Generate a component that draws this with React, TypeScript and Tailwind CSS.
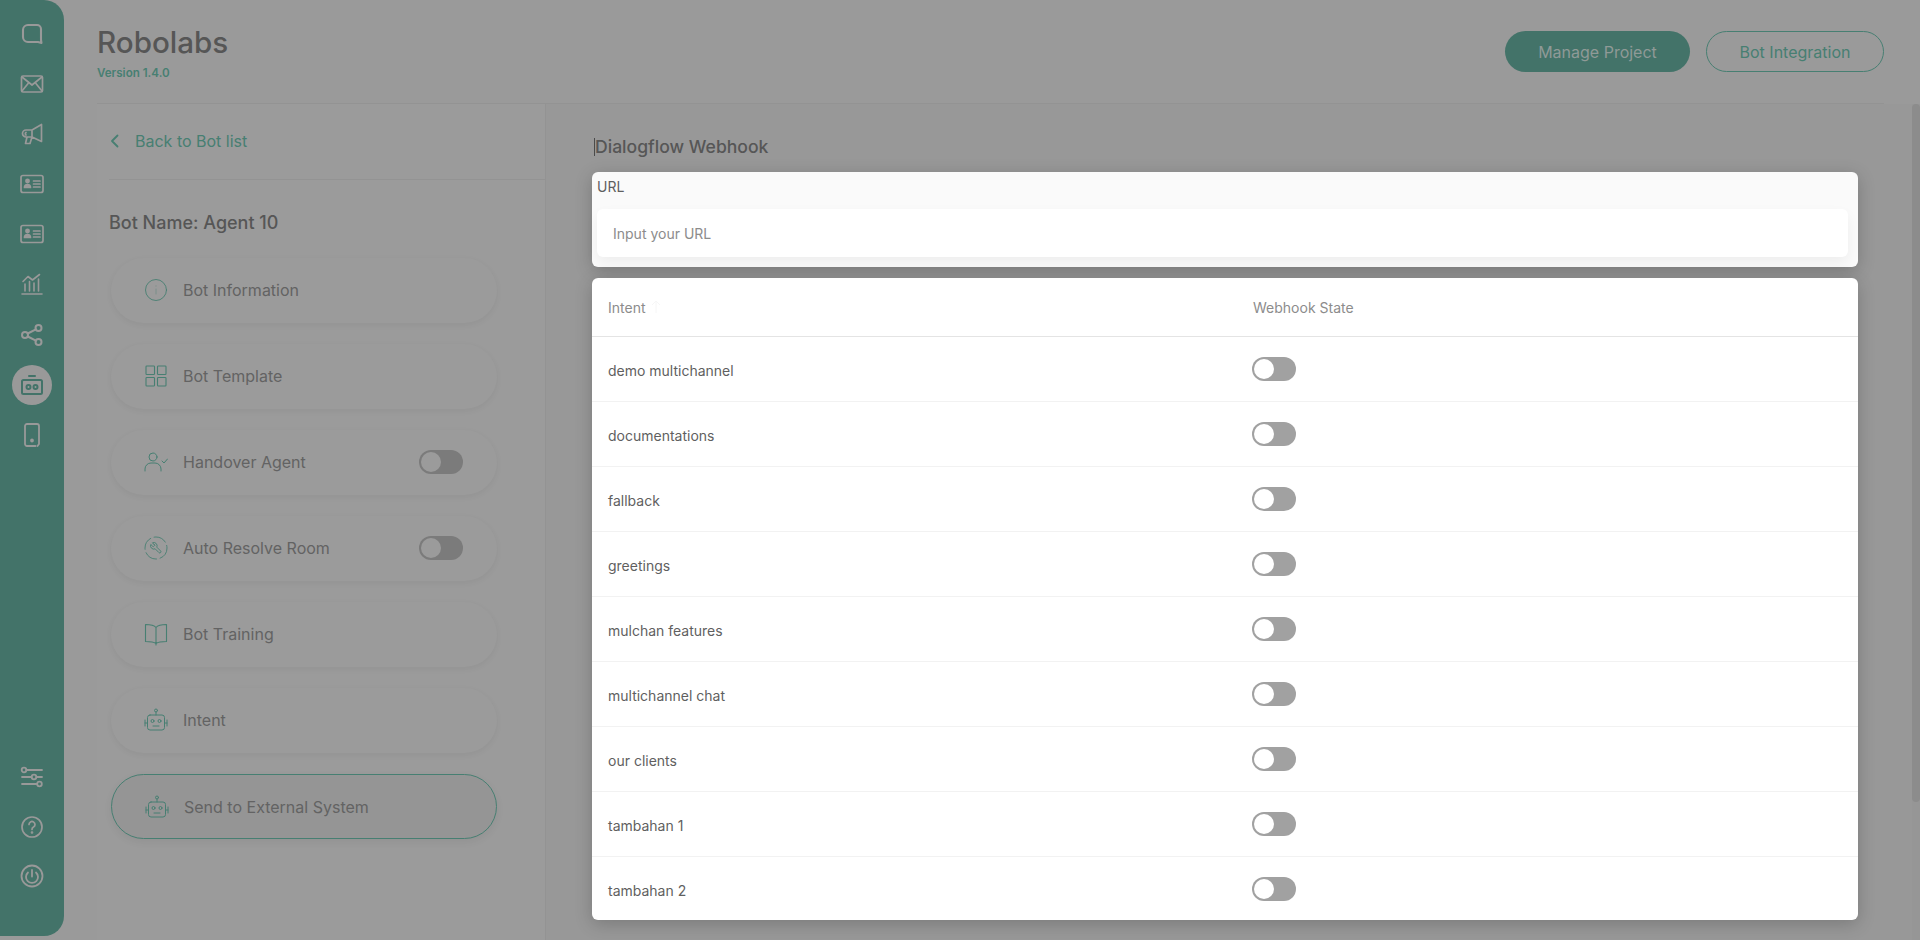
import React from "react";

const T = "#477f72";

function Svg({ size = 24, color, sw = 1.5, children }: { size?: number; color: string; sw?: number; children: React.ReactNode }) {
  return (
    <svg width={size} height={size} viewBox="0 0 24 24" fill="none" stroke={color} strokeWidth={sw} strokeLinecap="round" strokeLinejoin="round">
      {children}
    </svg>
  );
}

const IC = "#999999";
const SB = "#437369";
const navIcons: React.ReactNode[] = [
  <Svg color={IC} sw={2.1}><path d="M8 3h9a4 4 0 0 1 4 4v11l.5 3-3.500-1H8a5 5 0 0 1-5-5V8a5 5 0 0 1 5-5z" /></Svg>,
  <Svg color={IC} sw={1.7}><rect x="1.500" y="4" width="21" height="16" rx="1.500" /><path d="M2 5l10 8 10-8M2 19l6.500-8M22 19l-6.500-8" /></Svg>,
  <Svg color={IC} sw={1.7}><path d="M21.500 2.500v17L12 15H6a3.500 3.500 0 0 1 0-7h6l9.500-5.500zM12 8v7M7 15l-1.500 6.500H10l2-6.500" /><path d="M6 10.500a1.500 1.500 0 0 0 0 2.500" /></Svg>,
  <Svg color={IC} sw={1.7}><rect x="1" y="3.500" width="22" height="17" rx="2" /><circle cx="7.500" cy="9" r="1.600" fill={IC} /><path d="M4.500 15.500c0-4 6-4 6 0z" fill={IC} /><path d="M13.500 9h6.500M13.500 12h6.500M13.500 15h6.500" /></Svg>,
  <Svg color={IC} sw={1.7}><rect x="1" y="3.500" width="22" height="17" rx="2" /><circle cx="7.500" cy="9" r="1.600" fill={IC} /><path d="M4.500 15.500c0-4 6-4 6 0z" fill={IC} /><path d="M13.500 9h6.500M13.500 12h6.500M13.500 15h6.500" /></Svg>,
  <Svg color={IC} sw={1.600}><path d="M2 22h20M5 19v-7M9.500 19V9.500M14 19v-8M18.500 19V7M3 9.500l5-5 4.500 3.500 7-5.500" /></Svg>,
  <Svg color={IC} sw={2}><circle cx="5" cy="12" r="3" /><circle cx="18.500" cy="5" r="3" /><circle cx="18.500" cy="19" r="3" /><path d="M7.700 10.500l8.200-4.200M7.700 13.500l8.200 4.200" /></Svg>,
  <Svg color={SB} sw={2}><path d="M9 3h6" /><rect x="2" y="7" width="20" height="14" rx="1.500" /><circle cx="8.500" cy="14" r="2" /><circle cx="15.500" cy="14" r="2" /></Svg>,
  <Svg color={IC} sw={1.800}><path d="M15.500 23H7a2 2 0 0 1-2-2V3a2 2 0 0 1 2-2h10a2 2 0 0 1 2 2v18l-1.500 2" /><circle cx="12" cy="17.500" r="1" fill={IC} /></Svg>,
];
const bottomIcons: React.ReactNode[] = [
  <Svg color={IC} sw={1.800}><path d="M6.500 5H22M2 12h9.500M16.500 12H22M2 19h15" /><circle cx="4" cy="5" r="2.300" /><circle cx="14" cy="12" r="2.300" /><circle cx="19.500" cy="19" r="2.300" /></Svg>,
  <Svg color={IC} sw={1.700}><circle cx="12" cy="12" r="10" /><path d="M9 9.500a3 3 0 1 1 4.500 2.600c-1 .6-1.500 1.200-1.500 2.400" /><circle cx="12" cy="17.500" r=".5" fill={IC} /></Svg>,
  <Svg color={IC} sw={1.800}><circle cx="12" cy="12" r="10.500" /><path d="M12 6v6.500" /><path d="M8 8.500a6 6 0 1 0 8 0" /></Svg>,
];

const pillIcons: Record<string, React.ReactNode> = {
  info: <Svg color={T} sw={0.9}><circle cx="12" cy="12" r="10.500" /><path d="M12 11v5M12 7.800v.4" stroke="#7b8f8a" strokeWidth={1} /></Svg>,
  grid: <Svg color={T} sw={1.100}><rect x="2" y="2" width="8.500" height="8.500" rx=".8" /><rect x="13.500" y="2" width="8.500" height="8.500" rx=".8" /><rect x="2" y="13.500" width="8.500" height="8.500" rx=".8" /><rect x="13.500" y="13.500" width="8.500" height="8.500" rx=".8" /></Svg>,
  hand: <Svg color={T} sw={1}><circle cx="9" cy="7" r="4" /><path d="M1 21v-2a6 6 0 0 1 6-6h4a6 6 0 0 1 6 6v2M18 11l2 2 3.500-4" /></Svg>,
  auto: (
    <Svg color={T} sw={0.9}>
      <circle cx="12" cy="12" r="11" strokeDasharray="13 3.500" />
      <g transform="translate(18.600 5.400) scale(-0.55 0.55)" strokeWidth={1.700}>
        <path d="M14.700 6.300a1 1 0 0 0 0 1.400l1.600 1.600a1 1 0 0 0 1.400 0l3.770-3.770a6 6 0 0 1-7.940 7.940l-6.910 6.910a2.120 2.120 0 0 1-3-3l6.910-6.910a6 6 0 0 1 7.940-7.940l-3.760 3.760z" />
      </g>
    </Svg>
  ),
  book: <Svg color={T} sw={1.100}><path d="M12 5.500C10 3 6 2.500 1.500 2.500v17c4.500 0 8.500.5 10.500 2 2-1.500 6-2 10.500-2v-17c-4.500 0-8.500.5-10.500 3zM12 5.500V23" /></Svg>,
  robot: <Svg color={T} sw={1}><circle cx="12" cy="2.500" r="1.500" /><path d="M12 4v3" /><rect x="3.500" y="7" width="17" height="15" rx="2.500" /><circle cx="8.500" cy="13" r="1.500" /><circle cx="15.500" cy="13" r="1.500" /><path d="M9 18h6M1 12v6M23 12v6M1 15h2.500M20.500 15H23" /></Svg>,
};

function Toggle({ dim }: { dim?: boolean }) {
  return (
    <div className={`flex h-[24px] w-[44px] items-center rounded-full pl-[2px] ${dim ? "bg-[#7b7b7b]" : "bg-[#a1a1a1]"}`}>
      <div className={`h-[20px] w-[20px] rounded-full ${dim ? "bg-[#9b9b9b]" : "bg-white"}`} />
    </div>
  );
}

function Pill({ icon, label, toggle, active }: { icon: string; label: string; toggle?: boolean; active?: boolean }) {
  return (
    <div
      className={`flex h-[65px] w-[386px] items-center rounded-full pl-[32px] pr-[34px] ${
        active
          ? "border border-[#477f72] bg-[#959595] shadow-[0_3px_8px_rgba(0,0,0,0.06)]"
          : "bg-[#9b9b9b] shadow-[0_2px_6px_rgba(0,0,0,0.05)]"
      }`}
    >
      <div className="flex w-[25px] justify-center">{pillIcons[icon]}</div>
      <span className="ml-[15px] flex-1 text-[16px] text-[#636363]">{label}</span>
      {toggle && <Toggle dim />}
    </div>
  );
}

const intents = [
  "demo multichannel",
  "documentations",
  "fallback",
  "greetings",
  "mulchan features",
  "multichannel chat",
  "our clients",
  "tambahan 1",
  "tambahan 2",
];

export default function App() {
  return (
    <div className="flex h-[940px] w-[1920px] overflow-hidden bg-[#9a9a9a] font-['Inter',sans-serif]">
      <aside className="flex h-[936px] w-[64px] flex-col justify-between rounded-r-[20px] bg-[#437369] pt-[14px] pb-[40px]">
        <div className="flex flex-col items-center gap-[10.100px]">
          {navIcons.map((ic, i) => (
            <div key={i} className={`flex h-[40px] w-[40px] items-center justify-center rounded-full ${i === 7 ? "bg-[#999999]" : ""}`}>
              {ic}
            </div>
          ))}
        </div>
        <div className="flex flex-col items-center gap-[9.500px]">
          {bottomIcons.map((ic, i) => (
            <div key={i} className="flex h-[40px] w-[40px] items-center justify-center">
              {ic}
            </div>
          ))}
        </div>
      </aside>

      <div className="flex min-w-0 flex-1 flex-col">
        <div className="pl-[33px] pr-[36px]">
          <header className="flex h-[104px] items-start justify-between border-b border-[#939393]">
            <div className="pt-[22px]">
              <h1 className="text-[29.600px] leading-[40px] font-medium text-[#565656]">Robolabs</h1>
              <p className="mt-[3px] text-[11.600px] leading-[16px] font-semibold text-[#477f72]">Version 1.4.0</p>
            </div>
            <div className="flex gap-[16px] pt-[31px]">
              <div className="flex h-[41px] w-[185px] items-center justify-center rounded-full bg-[#437369] text-[16px] text-[#8f9a97]">Manage Project</div>
              <div className="flex h-[41px] w-[178px] items-center justify-center rounded-full border border-[#477f72] text-[16px] text-[#477f72]">Bot Integration</div>
            </div>
          </header>
        </div>

        <div className="flex min-h-0 flex-1">
          <section className="ml-[33px] w-[448px] bg-[#9b9b9b]">
            <div className="ml-[12px] flex h-[76px] items-center border-b border-[#939393] pb-[2px] pl-[1px]">
              <svg width="10" height="14" viewBox="0 0 10 14" fill="none" stroke="#477f72" strokeWidth="1.800" strokeLinecap="round" strokeLinejoin="round">
                <path d="M7.500 1.500L2 7l5.500 5.500" />
              </svg>
              <span className="ml-[15px] text-[16px] text-[#477f72]">Back to Bot list</span>
            </div>
            <h2 className="mt-[29px] ml-[12px] text-[18px] leading-[28px] font-medium text-[#565656]">Bot Name: Agent 10</h2>
            <div className="mt-[20.500px] ml-[14px] flex flex-col gap-[21.100px]">
              <Pill icon="info" label="Bot Information" />
              <Pill icon="grid" label="Bot Template" />
              <Pill icon="hand" label="Handover Agent" toggle />
              <Pill icon="auto" label="Auto Resolve Room" toggle />
              <Pill icon="book" label="Bot Training" />
              <Pill icon="robot" label="Intent" />
              <Pill icon="robot" label="Send to External System" active />
            </div>
          </section>

          <section className="flex flex-1 border-l border-[#939393] bg-[#989898]">
            <div className="ml-[46px] w-[1266px]">
              <div className="mt-[29px] mb-[11px] flex h-[28px] items-center pl-[2px]">
                <span className="h-[18px] w-px bg-[#4a4a4a]" />
                <h2 className="text-[17.600px] leading-[28px] font-medium text-[#565656]">Dialogflow Webhook</h2>
              </div>
              <div className="h-[95px] rounded-[6px] bg-[#fafafa] pt-[5px] pr-[10px] pl-[5px] shadow-[0_4px_18px_rgba(0,0,0,0.2)]">
                <p className="text-[14px] leading-[20px] text-[#5f5f5f]">URL</p>
                <div className="mt-[12px] flex h-[48px] items-center rounded-[6px] bg-white pl-[16px] text-[14px] text-[#8c8c8c] shadow-[0_6px_14px_rgba(0,0,0,0.05)]">
                  Input your URL
                </div>
              </div>
              <div className="mt-[11px] h-[642px] overflow-hidden rounded-[6px] bg-white shadow-[0_4px_18px_rgba(0,0,0,0.2)]">
                <div className="flex h-[59px] items-center border-b border-[#e4e4e4] text-[14px] text-[#8c8c8c]">
                  <div className="flex w-[660px] items-center pl-[16px]">
                    Intent
                    <svg className="ml-[5px]" width="10" height="14" viewBox="0 0 10 14" fill="none" stroke="#f6f6f6" strokeWidth="1">
                      <path d="M5 13V1M1 5l4-4 4 4" />
                    </svg>
                  </div>
                  <div className="pl-[1px]">Webhook State</div>
                </div>
                {intents.map((name, i) => (
                  <div key={name} className={`flex items-center ${i < 8 ? "h-[65px] border-b border-[#f2f2f2]" : "h-[64px]"}`}>
                    <div className="w-[660px] pt-[2px] pl-[16px] text-[14px] text-[#5f5f5f]">{name}</div>
                    <Toggle />
                  </div>
                ))}
              </div>
            </div>
            <div className="ml-auto w-[8px] bg-[#969696]">
              <div className="h-[698px] rounded-[4px] bg-[#8c8c8c]" />
            </div>
          </section>
        </div>
      </div>
    </div>
  );
}
